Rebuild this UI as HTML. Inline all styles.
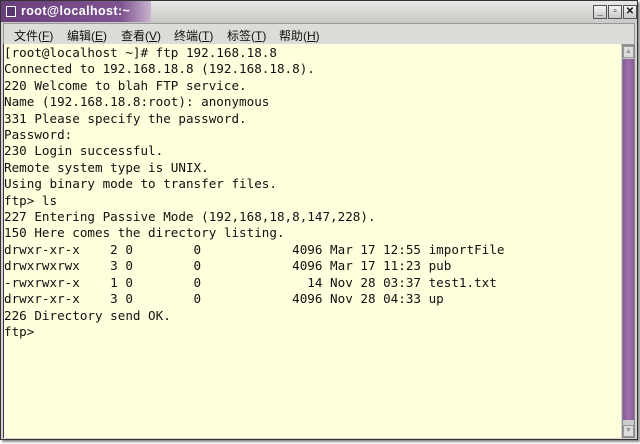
<!DOCTYPE html>
<html><head><meta charset="utf-8"><style>
*{margin:0;padding:0;box-sizing:border-box}
body{width:640px;height:444px;background:#fff;position:relative;overflow:hidden;font-family:"Liberation Sans","Noto Sans CJK SC",sans-serif}
#win{position:absolute;left:0;top:0;width:638px;height:440px;background:#d4d4d0;border:1px solid #333;box-shadow:2px 2px 2px #888}
#title{position:absolute;left:0;top:0;width:636px;height:22px;background:linear-gradient(#e8e8e6,#c8c8c4)}
#tp{position:absolute;left:0;top:0;width:150px;height:21px;background:linear-gradient(90deg,#6a3f7c,#7e5390 80%,#c9b4cf);}
#tp span{position:absolute;left:20px;top:3px;color:#fff;font-weight:bold;font-size:12.5px;letter-spacing:.4px}
#tp i{position:absolute;left:5px;top:5px;width:10px;height:11px;border:1px solid #fff;background:#5a3470}
.b{position:absolute;top:4px;width:14px;height:14px;border:1px solid #555;background:linear-gradient(#f4f4f4,#c8c8c8);font-size:10px;line-height:12px;text-align:center;font-weight:bold;color:#111}
#menu{position:absolute;left:2px;top:22px;width:632px;height:22px;background:#dcdcd8;border:1px solid #999;font-size:12px;color:#111}
#menu span{position:absolute;top:3px}
#term{position:absolute;left:2px;top:43px;width:618px;height:394px;background:#ffffdd;border-left:1px solid #4a2a55}
pre{position:absolute;left:0;top:1px;font-family:"DejaVu Sans Mono","Liberation Mono",monospace;font-size:12.6px;line-height:16.4px;color:#111}
#sb{position:absolute;left:621px;top:44px;width:13px;height:393px;background:#ccc;border:1px solid #888}
#th{position:absolute;left:0;top:13px;width:11px;height:361px;background:linear-gradient(90deg,#8a5a98,#a070ae,#8a5a98)}
.ar{position:absolute;left:0;width:11px;height:12px;background:#ddd;border:1px solid #999;font-size:7px;text-align:center;color:#999;line-height:10px}
</style></head><body>
<div id="win">
<div id="title"><div id="tp"><i></i><span>root@localhost:~</span></div>
<div class="b" style="left:592px">_</div><div class="b" style="left:607px">▫</div><div class="b" style="left:622px">✕</div></div>
<div id="menu"><span style="left:10px">文件(<u>F</u>)</span><span style="left:63px">编辑(<u>E</u>)</span><span style="left:117px">查看(<u>V</u>)</span><span style="left:170px">终端(<u>T</u>)</span><span style="left:223px">标签(<u>T</u>)</span><span style="left:275px">帮助(<u>H</u>)</span></div>
<div id="term"><pre>[root@localhost ~]# ftp 192.168.18.8
Connected to 192.168.18.8 (192.168.18.8).
220 Welcome to blah FTP service.
Name (192.168.18.8:root): anonymous
331 Please specify the password.
Password:
230 Login successful.
Remote system type is UNIX.
Using binary mode to transfer files.
ftp&gt; ls
227 Entering Passive Mode (192,168,18,8,147,228).
150 Here comes the directory listing.
drwxr-xr-x    2 0        0            4096 Mar 17 12:55 importFile
drwxrwxrwx    3 0        0            4096 Mar 17 11:23 pub
-rwxrwxr-x    1 0        0              14 Nov 28 03:37 test1.txt
drwxr-xr-x    3 0        0            4096 Nov 28 04:33 up
226 Directory send OK.
ftp&gt;</pre></div>
<div id="sb"><div class="ar" style="top:0">▲</div><div id="th"></div><div class="ar" style="bottom:0">▼</div></div>
</div>
</body></html>
